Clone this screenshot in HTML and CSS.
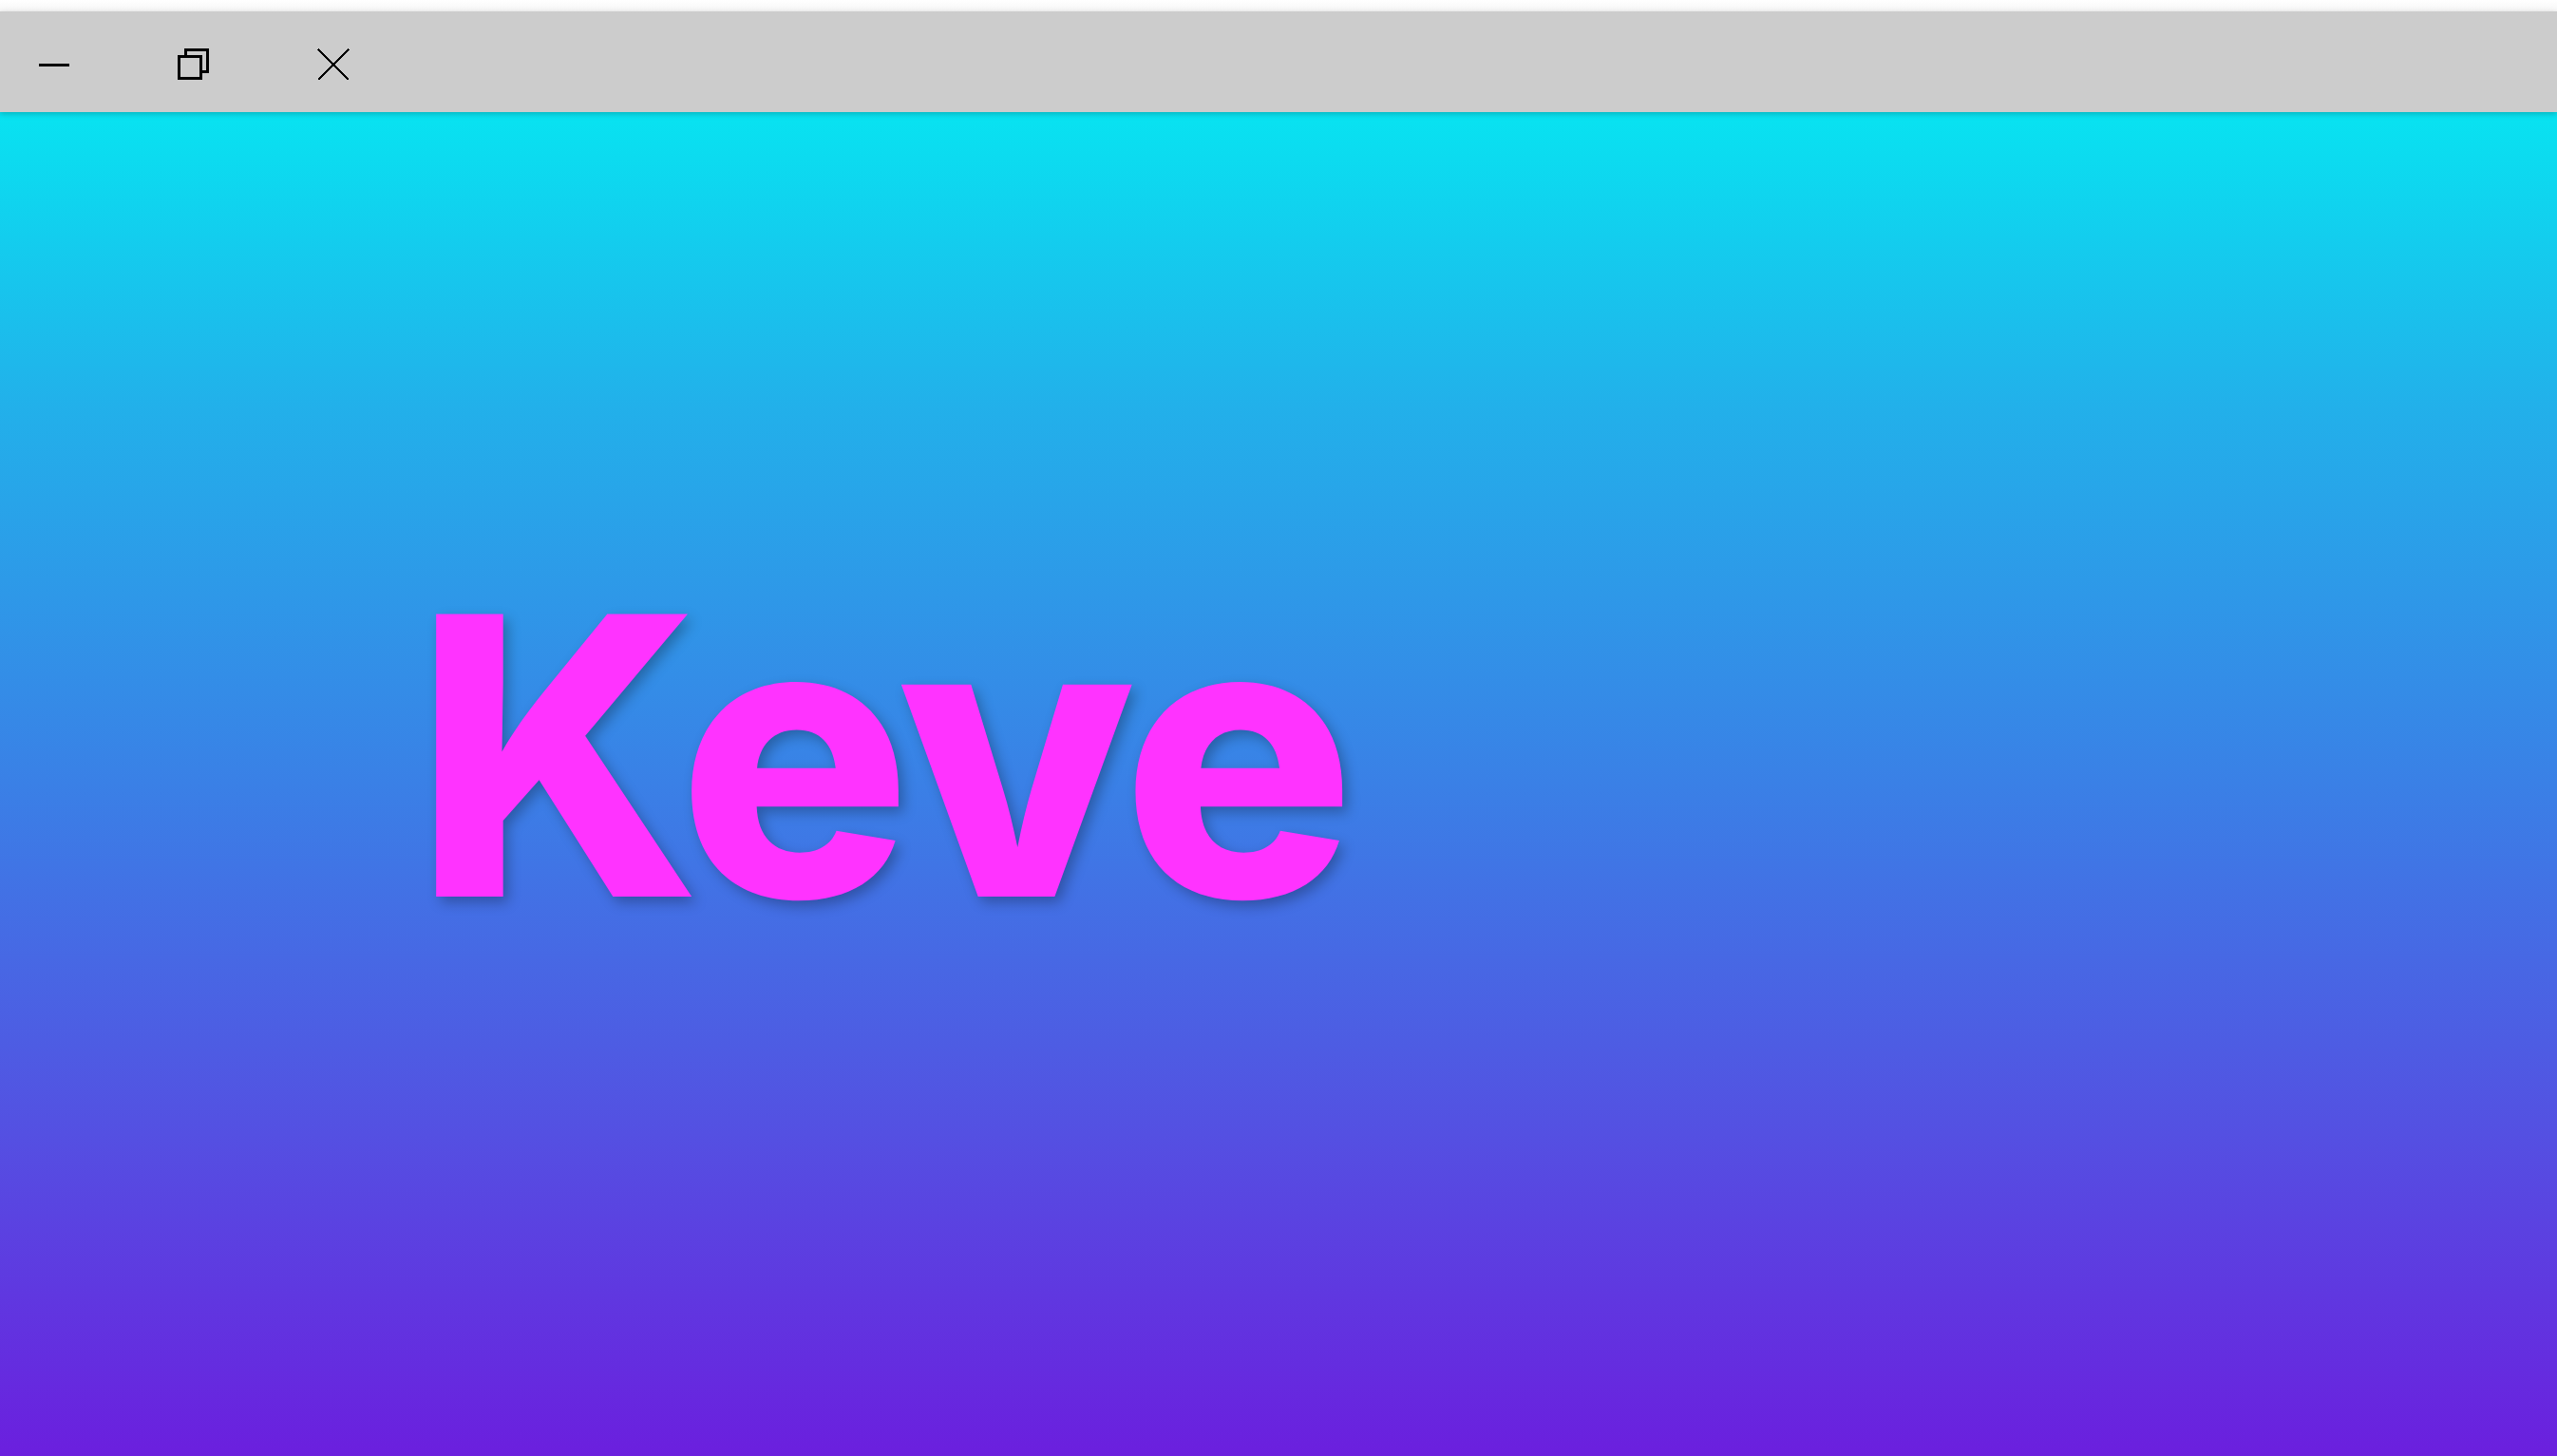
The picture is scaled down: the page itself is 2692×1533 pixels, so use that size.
FILE: index.html
```html
<!DOCTYPE html>
<html>
<head>
<meta charset="utf-8">
<link rel="stylesheet" href="styles.css">
</head>
<body>
<div class="window">
  <div class="top-strip"></div>
  <div class="titlebar">
    <div class="btn">
      <svg width="34" height="34" viewBox="0 0 34 34"><path d="M1 17.5H33" stroke="#000" stroke-width="3"/></svg>
    </div>
    <div class="btn">
      <svg width="34" height="34" viewBox="0 0 34 34"><rect x="1.5" y="8.5" width="23" height="23" fill="none" stroke="#000" stroke-width="3"/><path d="M8.5 8.5V1.5H31.5V24.5H24.5" fill="none" stroke="#000" stroke-width="3"/></svg>
    </div>
    <div class="btn">
      <svg width="34" height="34" viewBox="0 0 34 34"><path d="M1 1L33 33M33 1L1 33" stroke="#000" stroke-width="2"/></svg>
    </div>
  </div>
  <main class="content">
    <h1 class="title">Keve</h1>
  </main>
</div>
</body>
</html>
```
FILE: styles.css
```css
html, body {
  margin: 0;
  padding: 0;
  height: 100%;
  background: #ffffff;
}
.window {
  display: flex;
  flex-direction: column;
  height: 100%;
}
.top-strip {
  height: 12px;
  background: linear-gradient(#ffffff, #f6f6f6);
  flex: none;
}
.titlebar {
  flex: none;
  height: 106px;
  box-sizing: border-box;
  padding-top: 5px;
  background: #cccccc;
  display: flex;
  align-items: center;
  gap: 113px;
  padding-left: 40px;
  position: relative;
  z-index: 1;
  box-shadow: 0 2px 6px rgba(0, 0, 0, 0.22);
}
.btn {
  width: 34px;
  height: 34px;
  display: flex;
  align-items: center;
  justify-content: center;
}
.btn svg {
  display: block;
  shape-rendering: crispEdges;
}
.content {
  flex: 1;
  background: linear-gradient(#08e3f1 0%, #22b0ea 22%, #3a80e6 50%, #5450e2 76%, #6b1fde 100%);
  padding: 473px 0 0 436px;
}
.title {
  margin: 0;
  font-family: Inter, "Noto Sans", sans-serif;
  font-weight: 800;
  font-size: 409px;
  line-height: 1;
  color: #ff33ff;
  text-shadow: 5px 6px 14px rgba(0, 0, 0, 0.28);
  letter-spacing: -8px;
}
```
